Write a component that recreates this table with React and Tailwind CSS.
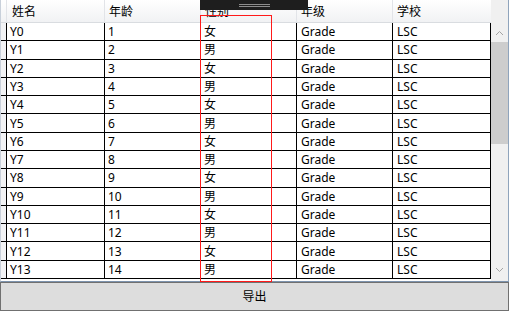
import React from "react";

const rows = Array.from({ length: 14 }, (_, i) => ({
  name: "Y" + i,
  age: String(i + 1),
  sex: i % 2 === 0 ? "女" : "男",
  grade: "Grade",
  school: "LSC",
}));

const font = { fontFamily: '"Noto Sans", "Noto Sans CJK SC", sans-serif' };

export default function App() {
  return (
    <div
      className="relative w-[509px] h-[311px] bg-white text-[12px] text-black overflow-hidden flex flex-col"
      style={font}
    >
      {/* grid */}
      <div className="flex h-[282px] border-l border-r border-b border-l-[#c8d0da] border-r-[#8fa4bc] border-b-[#7d93ad]">
        <div className="flex flex-col w-[490px]">
          {/* header */}
          <div className="flex h-[23px] bg-gradient-to-b from-[#ffffff] to-[#f1f2f4] border-b border-[#d9dce0] leading-none">
            <div className="w-[6px] border-r border-[#e2e4e8]"></div>
            <div className="w-[98px] border-r border-[#e2e4e8] pl-[5px] flex items-center pt-[2px]">姓名</div>
            <div className="w-[96px] border-r border-[#e2e4e8] pl-[4px] flex items-center pt-[2px]">年龄</div>
            <div className="w-[96px] border-r border-[#e2e4e8] pl-[4px] flex items-center pt-[2px]">性别</div>
            <div className="w-[96px] border-r border-[#e2e4e8] pl-[4px] flex items-center pt-[2px]">年级</div>
            <div className="w-[98px] pl-[4px] flex items-center pt-[2px]">学校</div>
          </div>
          {/* rows */}
          {rows.map((r) => (
            <div key={r.name} className="flex h-[18.29px] border-b border-black leading-none">
              <div className="w-[6px] bg-[#f2f3f5] border-r border-black"></div>
              <div className="w-[98px] border-r border-black pl-[3px] flex items-center pt-[1px]">{r.name}</div>
              <div className="w-[96px] border-r border-black pl-[3px] flex items-center pt-[1px]">{r.age}</div>
              <div className="w-[96px] border-r border-black pl-[3px] flex items-center pt-[1px]">{r.sex}</div>
              <div className="w-[96px] border-r border-black pl-[4px] flex items-center pt-[1px]">{r.grade}</div>
              <div className="w-[98px] border-r border-black pl-[4px] flex items-center pt-[1px]">{r.school}</div>
            </div>
          ))}
        </div>
        {/* scrollbar */}
        <div className="w-[17px] bg-[#f0f0f0] flex flex-col">
          <div className="h-[23px]"></div>
          <div className="h-[19px] flex items-center justify-center">
            <svg width="9" height="6" viewBox="0 0 9 6">
              <path d="M1 5 L4.5 1.5 L8 5" fill="none" stroke="#a3a3a3" strokeWidth="1" />
            </svg>
          </div>
          <div className="h-[102px] bg-[#cdcdcd]"></div>
          <div className="flex-1"></div>
          <div className="h-[19px] flex items-center justify-center mb-[2px]">
            <svg width="9" height="6" viewBox="0 0 9 6">
              <path d="M1 1 L4.5 4.5 L8 1" fill="none" stroke="#a3a3a3" strokeWidth="1" />
            </svg>
          </div>
        </div>
      </div>
      {/* button */}
      <div className="flex-1 bg-[#dddddd] border border-[#707070] flex items-center justify-center leading-none">
        导出
      </div>

      {/* debug toolbar overlay */}
      <div className="absolute left-[200px] top-0 w-[108px] h-[10px] bg-[#1e1e1e] flex flex-col items-center justify-center gap-[1px]">
        <div className="w-[31px] h-[1px] bg-[#8c8c8c]"></div>
        <div className="w-[31px] h-[1px] bg-[#8c8c8c]"></div>
      </div>
      {/* red adorner */}
      <div className="absolute left-[200px] top-[15px] w-[72px] h-[267px] border border-solid border-[#ff1a1a]"></div>
    </div>
  );
}
